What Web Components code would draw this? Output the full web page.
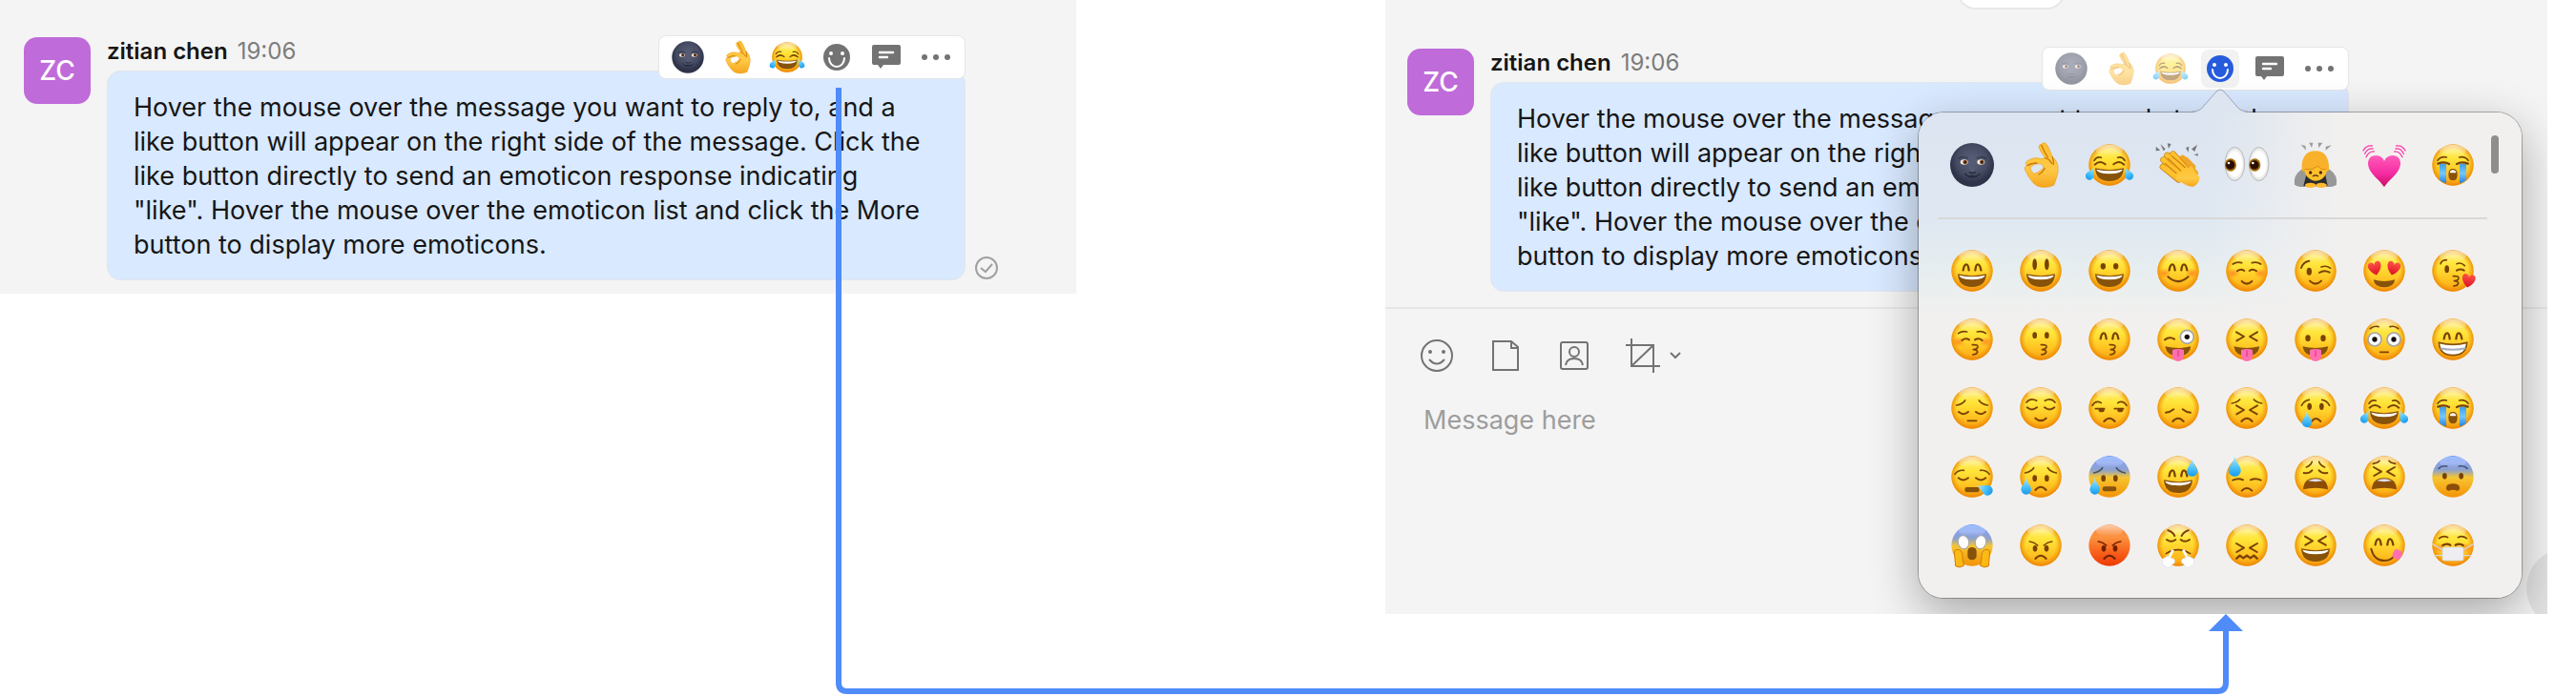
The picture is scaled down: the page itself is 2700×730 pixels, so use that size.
<!DOCTYPE html>
<html lang="en">
<head>
<meta charset="utf-8">
<title>Message reactions</title>
<style>
  body {
    margin: 0;
    background: #fff;
    color: #161616;
    font-family: Inter, "Liberation Sans", sans-serif;
  }
</style>
</head>
<body>
<reaction-guide>
  <chat-panel slot="before">
    <chat-message initials="ZC" author="zitian chen" time="19:06" delivered>
      Hover the mouse over the message you want to reply to, and a like button will appear on the right side of the message. Click the like button directly to send an emoticon response indicating "like". Hover the mouse over the emoticon list and click the More button to display more emoticons.
      <reaction-bar slot="actions"></reaction-bar>
    </chat-message>
  </chat-panel>
  <chat-panel slot="after" conversation>
    <chat-message initials="ZC" author="zitian chen" time="19:06">
      Hover the mouse over the message you want to reply to, and a like button will appear on the right side of the message. Click the like button directly to send an emoticon response indicating "like". Hover the mouse over the emoticon list and click the More button to display more emoticons.
      <reaction-bar slot="actions" open></reaction-bar>
    </chat-message>
    <message-composer slot="composer"></message-composer>
  </chat-panel>
</reaction-guide>

<script>
// Emoji are drawn on a 132 x 132 grid, the face is a circle round (66, 66).
const mirror = (markup) => `${markup}<g transform="translate(132 0) scale(-1 1)">${markup}</g>`;
const line = (d, width = 6) => `<path d="${d}" fill="none" stroke="var(--ink, #7a4204)" stroke-width="${width}" stroke-linecap="round" stroke-linejoin="round"/>`;
const pair = (d, width) => mirror(line(d, width));
const oval = (cx, cy, rx, ry, fill = 'var(--ink, #7a4204)') => `<ellipse cx="${cx}" cy="${cy}" rx="${rx}" ry="${ry}" fill="${fill}"/>`;
const dots = (cx, cy, rx = 7, ry = 10) => mirror(oval(cx, cy, rx, ry));
const shape = (d, fill, extra = '') => `<path d="${d}" fill="${fill}" ${extra}/>`;

const arches = pair('M38 64Q41 46 48 46Q54 46 56 64', 7);
const squint = (top) => pair(`M33 ${top}L57 ${top + 14}L34 ${top + 27}`, 6);
const blush = mirror(oval(22, 74, 22, 16, 'url(#blush)'));
const kiss = line('M67 83Q86 82 84 90Q82 97 70 98Q84 99 83 106Q80 113 68 114', 5);
const frown = line('M49 108Q66 88 83 108');
const grin = shape('M21 76Q66 87 111 76Q109 117 66 117Q23 117 21 76Z', '#87520a')
  + shape('M25 80Q66 90 107 80Q105 92 66 94Q27 92 25 80Z', '#fff');
const tongueMouth = shape('M25 88Q66 98 106 88Q102 118 66 119Q30 118 25 88Z', '#87520a')
  + shape('M48 99Q66 93 84 99V118Q82 135 66 135Q50 135 48 118Z', '#ff6fb0')
  + '<path d="M66 100V120" stroke="#e0408a" stroke-width="4"/>';
const wail = shape('M27 106Q28 70 66 70Q104 70 105 106Q66 96 27 106Z', '#8c4d06')
  + shape('M42 79Q66 66 90 79Q66 84 42 79Z', '#dfe0ec');
const heart = (x, y, scale, turn, fill = 'url(#heart)') =>
  `<path transform="translate(${x} ${y}) rotate(${turn}) scale(${scale})" d="M0 22C-26 4 -25 -20 -11 -20Q-2 -20 0 -10Q2 -20 11 -20C25 -20 26 4 0 22Z" fill="${fill}"/>`;
const drop = (x, y, scale = 1, turn = 0) =>
  `<path transform="translate(${x} ${y}) rotate(${turn}) scale(${scale})" d="M0 -26C3 -8 16 0 16 12A16 16 0 0 1 -16 12C-16 0 -3 -8 0 -26Z" fill="url(#tear)"/>`;
const wideEye = (cx, cy, pupil = 8) =>
  `<circle cx="${cx}" cy="${cy}" r="21" fill="#fff" stroke="#a5a5a5" stroke-width="5"/><circle cx="${cx}" cy="${cy}" r="${pupil}" fill="#160e0a"/>`;
const browsWorried = pair('M17 54Q36 50 44 38', 5);
const joy = pair('M18 52Q26 38 40 43', 5) + pair('M20 65Q36 50 53 64') + grin
  + drop(8, 92, .8, 28) + drop(124, 92, .8, -28);
const sob = mirror('<path d="M24 62H45V124Q34 121 24 113Z" fill="url(#stream)"/>')
  + pair('M18 52Q28 38 46 42', 5) + pair('M19 62Q38 54 54 63', 7)
  + shape('M52 95Q52 78 66 78Q80 78 80 95Q80 115 66 115Q52 115 52 95Z', '#87520a')
  + shape('M56 91Q57 82 66 82Q75 82 76 91Z', '#fff');
const angry = pair('M31 54Q44 55 56 66', 5) + dots(48, 76) + frown;

const faces = {
  'smile': arches + grin,
  'smiley': dots(47, 46, 7, 18) + grin,
  'grinning': dots(46, 52, 8, 10) + grin,
  'blush': blush + arches + line('M34 85Q66 114 98 85'),
  'relaxed': blush + pair('M22 45Q34 36 50 41', 5) + pair('M36 67Q47 58 58 66') + line('M50 99Q66 115 82 99'),
  'wink': line('M21 57Q28 37 46 35') + line('M84 54Q100 48 113 58', 5) + oval(46, 68, 8, 12) + line('M78 72Q93 62 110 71') + line('M48 98Q66 116 84 98'),
  'heart-eyes': heart(37, 58, 1, -14) + heart(95, 58, 1, 14) + shape('M32 94Q66 104 100 94Q96 118 66 118Q36 118 32 94Z', '#87520a'),
  'kissing-heart': line('M27 44Q31 32 46 32', 5) + line('M78 44Q91 38 103 50', 5) + oval(47, 61, 7, 12) + line('M78 65Q90 58 101 65') + kiss + heart(115, 97, 1, 10),
  'kissing-closed-eyes': blush + pair('M23 47Q34 38 50 42', 5) + pair('M34 69Q45 60 57 67') + kiss,
  'kissing': dots(47, 53) + kiss,
  'kissing-smiling-eyes': arches + kiss,
  'winking-tongue': line('M24 67Q39 56 54 65') + wideEye(94, 58) + tongueMouth,
  'squinting-tongue': squint(43) + tongueMouth,
  'tongue': dots(42, 62, 8, 10) + tongueMouth,
  'flushed': blush + pair('M22 32Q34 22 48 26', 5) + mirror(wideEye(36, 66)) + line('M53 106H79', 5),
  'grin': arches + shape('M22 76Q66 88 110 76Q108 116 66 116Q24 116 22 76Z', '#fff', 'stroke="#87520a" stroke-width="5"') + '<path d="M26 94Q66 103 106 94" fill="none" stroke="#a9aebd" stroke-width="6"/>',
  'pensive': pair('M17 57Q36 54 44 42', 5) + pair('M24 78Q38 91 54 78') + line('M52 106H80', 5),
  'relieved': pair('M21 48Q34 32 53 43', 5) + pair('M23 64Q38 77 54 64') + line('M49 98Q66 113 83 98'),
  'unamused': pair('M12 58Q24 40 40 50', 5) + line('M22 68H50', 5) + line('M82 68H110', 5) + oval(41, 73, 9, 6) + oval(100, 73, 9, 6) + frown,
  'disappointed': pair('M27 80Q42 79 52 70') + frown,
  'persevering': pair('M19 51Q36 48 44 39', 5) + squint(58) + frown,
  'crying': pair('M22 58Q30 42 46 40', 5) + dots(47, 61, 7, 11) + line('M54 108Q66 90 82 108') + drop(39, 100, .95),
  'joy': joy,
  'sob': sob,
  'sleepy': pair('M12 58Q22 44 40 46', 5) + pair('M23 70Q38 83 54 70') + '<rect x="43" y="99" width="46" height="16" rx="7" fill="#87520a"/>' + drop(104, 104, 1, -65),
  'sad-relieved': browsWorried + dots(47, 71) + frown + drop(20, 94),
  'anxious': '<g style="--ink:#4c5360">' + browsWorried + '</g>' + dots(47, 71) + '<rect x="44" y="97" width="44" height="15" rx="7" fill="#87520a"/>' + drop(20, 94),
  'sweat-smile': arches + grin + drop(110, 36, 1.05),
  'sweat': pair('M22 77Q38 69 54 76') + line('M50 110Q66 94 82 110') + drop(28, 32, 1.2),
  'weary': pair('M37 36Q51 31 55 19', 5) + pair('M29 54Q44 58 55 46') + wail,
  'tired': pair('M31 25Q46 23 51 16', 5) + squint(36) + wail,
  'fearful': '<g style="--ink:#46536f">' + pair('M21 40Q30 30 47 33', 5) + '</g>' + dots(40, 64) + shape('M45 100Q46 88 66 88Q86 88 87 100Q88 110 78 110Q66 104 54 110Q44 110 45 100Z', '#8c4d06'),
  'scream': mirror('<ellipse cx="39" cy="56" rx="17" ry="21" transform="rotate(-12 39 56)" fill="#fff" stroke="#a7a7a7" stroke-width="3"/>')
    + '<rect x="52" y="72" width="28" height="40" rx="13" fill="#87520a"/>'
    + mirror('<path d="M10 84Q16 77 26 80Q38 86 36 106L40 130Q26 139 14 131Z" fill="#fcb914" stroke="#cf7d09" stroke-width="3"/>'),
  'angry': angry,
  'rage': '<g style="--ink:#702002">' + angry + '</g>',
  'triumph': pair('M34 19Q48 23 55 36') + pair('M30 48Q44 59 58 48') + line('M28 92Q66 68 104 92', 5)
    + mirror('<path d="M50 80L36 108" stroke="#fff" stroke-width="8"/><path d="M17 119a9 9 0 0 1 8-14a11 11 0 0 1 20 2a9 9 0 0 1 3 18a12 12 0 0 1-22 6a9 9 0 0 1-9-12Z" fill="#fff" stroke="#cfdcec" stroke-width="2"/>'),
  'confounded': squint(60) + line('M34 107L44 98L55 106L66 98L77 106L88 98L98 107', 7),
  'laughing': squint(38) + grin,
  'yum': arches + line('M25 77Q34 114 66 114Q92 114 103 91') + '<rect x="93" y="80" width="28" height="29" rx="10" transform="rotate(25 107 95)" fill="#ff6fae"/>',
  'mask': blush + pair('M23 44Q36 34 50 41', 5) + pair('M34 66Q46 58 58 65', 7)
    + '<g style="--ink:#d9d5d0">' + pair('M2 62L36 82', 4) + pair('M8 98L36 98', 4) + '</g>'
    + '<rect x="33" y="72" width="66" height="42" rx="5" fill="#eeeef1" stroke="#d0d0d4" stroke-width="2"/>'
};

const spark = (points) => `<polygon points="${points}" fill="#777"/>`;
const objects = {
  'new-moon': `<circle cx="66" cy="66" r="69" fill="url(#moon)"/>
    <path d="M22 46Q36 36 54 45M80 45Q98 36 112 46" fill="none" stroke="#33384c" stroke-width="4"/>
    <path d="M61 42L58 86Q67 94 76 86L72 42Z" fill="#545b73"/><path d="M57 88Q67 95 78 88" fill="none" stroke="#262b3d" stroke-width="4"/>
    <ellipse cx="41" cy="57" rx="12" ry="8" fill="#f6ebe0"/><ellipse cx="94" cy="57" rx="12" ry="8" fill="#f6ebe0"/>
    <circle cx="44" cy="57" r="7" fill="#7b4422"/><circle cx="97" cy="57" r="7" fill="#7b4422"/>
    <circle cx="44" cy="57" r="3" fill="#111"/><circle cx="97" cy="57" r="3" fill="#111"/>
    <path d="M44 94Q66 117 90 94M54 103Q67 98 80 103" fill="none" stroke="#252a3c" stroke-width="4" stroke-linecap="round"/>`,
  'ok-hand': `<path fill-rule="evenodd" fill="url(#hand)" stroke="#e89a16" stroke-width="2" d="M68 2Q72 -6 80 -3Q88 4 94 20L103 41Q118 53 120 72Q122 88 116 104Q112 118 107 130Q94 137 72 136Q52 134 42 122Q26 104 17 82Q12 70 24 68Q14 60 24 53Q44 40 64 46Q72 50 79 42Q64 24 60 9Q62 0 68 2ZM34 72Q32 86 46 94Q60 90 74 76Q76 68 66 62Q48 60 34 72Z"/>
    <path d="M68 4Q76 24 88 42M24 68Q36 60 54 60M80 44Q94 48 101 62M79 76Q71 90 60 96M103 42Q108 56 106 64" fill="none" stroke="#cc7a0c" stroke-width="4" stroke-linecap="round"/>`,
  'clap': `<g fill="none" stroke-linecap="round">
      <path d="M62 44L112 100M80 44L120 92M90 50L112 72" stroke="#f0a628" stroke-width="18"/>
      <path d="M18 72L68 112M20 50L82 110M32 36L96 104M50 32L106 96" stroke="#c87c12" stroke-width="20"/>
      <path d="M18 72L70 112M20 50L82 110M32 36L96 104M50 32L106 96" stroke="#ffc12e" stroke-width="16"/></g>
    <path d="M60 100L108 68Q124 96 134 104Q132 126 114 134Q92 136 60 108Z" fill="url(#hand)"/>
    <path d="M26 62L60 92M34 46L74 84M46 38L88 74" fill="none" stroke="#cf8314" stroke-width="4" stroke-linecap="round"/>`
    + spark('10,0 26,16 20,22') + spark('-4,8 10,20 -4,22') + spark('90,12 100,8 98,26') + spark('108,16 126,2 118,24') + spark('116,34 128,30 128,38') + spark('32,-2 44,0 36,14'),
  'eyes': `<g stroke="#bdbdbd" stroke-width="3" fill="url(#ball)"><ellipse cx="28" cy="63" rx="31" ry="53"/><ellipse cx="104" cy="63" rx="31" ry="53"/></g>
    <g fill="#a26b06"><ellipse cx="15" cy="66" rx="18" ry="20"/><ellipse cx="91" cy="66" rx="18" ry="20"/></g>
    <g fill="#2a0d02"><circle cx="14" cy="66" r="14"/><circle cx="90" cy="66" r="14"/></g>
    <g fill="#fff"><circle cx="9" cy="60" r="4"/><circle cx="85" cy="60" r="4"/></g>`,
  'bow': `<path d="M0 128Q-4 98 20 82Q64 44 112 82Q136 98 132 128Q120 138 88 134H44Q12 138 0 128Z" fill="#989898"/>
    <path d="M38 92H96L104 132H28Z" fill="#2c2c2e"/>
    <path d="M29 58Q26 98 48 110Q66 122 86 110Q106 98 102 58Z" fill="#ffc02c"/>
    <path d="M23 82Q20 22 66 22Q110 22 108 82Q102 92 98 80Q84 84 74 70Q56 84 32 80Q26 92 23 82Z" fill="#f9b02a"/>
    <path d="M98 80Q84 84 74 70Q56 84 32 80" fill="none" stroke="#d98a13" stroke-width="3"/>
    <ellipse cx="50" cy="90" rx="5" ry="5" fill="#4b2505"/><ellipse cx="82" cy="90" rx="5" ry="5" fill="#4b2505"/>
    <path d="M57 102Q66 95 75 102" fill="none" stroke="#4b2505" stroke-width="4"/>
    <ellipse cx="50" cy="130" rx="17" ry="8" fill="#ffba2c"/><ellipse cx="84" cy="130" rx="17" ry="8" fill="#ffba2c"/>
    <g opacity=".7">` + spark('20,2 34,6 36,20') + spark('46,-4 58,-4 54,12') + spark('74,-4 88,-4 76,12') + spark('98,8 116,4 98,20') + '</g>',
  'heartbeat': `<path d="M66 136C48 108 14 92 15 58Q18 36 40 36Q60 38 66 54Q72 38 92 36Q114 36 117 58C118 92 84 108 66 136Z" fill="url(#pink)"/>`
    + mirror('<path d="M28 6Q9 3 0 21M30 15Q14 12 5 31M34 24Q19 22 9 41" fill="none" stroke="#f83ca9" stroke-width="4" stroke-linecap="round"/>')
};

const blueTops = ['anxious', 'fearful', 'scream'];

class EmojiGlyph extends HTMLElement {
  connectedCallback() {
    if (this.shadowRoot) {
      return;
    }
    const name = this.getAttribute('name');
    const skin = name === 'rage' ? 'red' : blueTops.includes(name) ? 'cold' : 'skin';
    const art = objects[name] || `<circle cx="66" cy="66" r="65" fill="url(#${skin})"/>${skin === 'skin' ? '<circle cx="66" cy="66" r="65" fill="url(#edge)"/>' : ''}<ellipse cx="66" cy="20" rx="42" ry="18" fill="url(#shine)"/>${faces[name]}`;
    this.attachShadow({ mode: 'open' }).innerHTML = `
      <style>
        :host { display: block; width: var(--emoji-size, 44px); height: var(--emoji-size, 44px); }
        svg { display: block; width: 100%; height: 100%; overflow: visible; }
      </style>
      <svg viewBox="0 0 132 132" aria-hidden="true">
        <defs>
          <linearGradient id="skin" x2="0" y2="1"><stop offset="0" stop-color="#fff07a"/><stop offset=".35" stop-color="#ffe53a"/><stop offset=".65" stop-color="#ffc925"/><stop offset="1" stop-color="#fba414"/></linearGradient>
          <radialGradient id="edge"><stop offset=".72" stop-color="#f08a00" stop-opacity="0"/><stop offset="1" stop-color="#e67c00" stop-opacity=".75"/></radialGradient>
          <linearGradient id="shine" x2="0" y2="1"><stop offset="0" stop-color="#fff" stop-opacity=".6"/><stop offset="1" stop-color="#fff" stop-opacity="0"/></linearGradient>
          <linearGradient id="red" x2="0" y2="1"><stop offset="0" stop-color="#f98536"/><stop offset=".3" stop-color="#fb9340"/><stop offset=".6" stop-color="#fa6a20"/><stop offset="1" stop-color="#ee3904"/></linearGradient>
          <linearGradient id="cold" x2="0" y2="1"><stop offset="0" stop-color="#1d65f8"/><stop offset=".16" stop-color="#84a0f0"/><stop offset=".34" stop-color="#8ea2cc"/><stop offset=".52" stop-color="#f6c531"/><stop offset="1" stop-color="#f39306"/></linearGradient>
          <radialGradient id="blush"><stop offset="0" stop-color="#ff7a1c" stop-opacity=".75"/><stop offset="1" stop-color="#ff7a1c" stop-opacity="0"/></radialGradient>
          <linearGradient id="heart" x2="0" y2="1"><stop offset="0" stop-color="#ff5248"/><stop offset="1" stop-color="#dc1024"/></linearGradient>
          <linearGradient id="pink" x2="0" y2="1"><stop offset="0" stop-color="#ff5cba"/><stop offset=".6" stop-color="#f429a0"/><stop offset="1" stop-color="#c50d5d"/></linearGradient>
          <linearGradient id="tear" x2="0" y2="1"><stop offset="0" stop-color="#b5eafc"/><stop offset=".5" stop-color="#56c6fa"/><stop offset="1" stop-color="#149bee"/></linearGradient>
          <linearGradient id="stream" x2="0" y2="1"><stop offset="0" stop-color="#3f9de8"/><stop offset=".5" stop-color="#78c6f8"/><stop offset="1" stop-color="#1f7fe0"/></linearGradient>
          <linearGradient id="hand" x2="0" y2="1"><stop offset="0" stop-color="#ffc02f"/><stop offset=".6" stop-color="#ffc946"/><stop offset="1" stop-color="#f5a61e"/></linearGradient>
          <radialGradient id="moon" cx=".5" cy=".4"><stop offset="0" stop-color="#5a617a"/><stop offset=".7" stop-color="#454b62"/><stop offset="1" stop-color="#2e3349"/></radialGradient>
          <radialGradient id="ball"><stop offset=".7" stop-color="#fff"/><stop offset="1" stop-color="#dcdcdc"/></radialGradient>
        </defs>
        ${art}
      </svg>`;
  }
}

const frequent = ['new-moon', 'ok-hand', 'joy', 'clap', 'eyes', 'bow', 'heartbeat', 'sob'];
const allFaces = [
  'smile', 'smiley', 'grinning', 'blush', 'relaxed', 'wink', 'heart-eyes', 'kissing-heart',
  'kissing-closed-eyes', 'kissing', 'kissing-smiling-eyes', 'winking-tongue', 'squinting-tongue', 'tongue', 'flushed', 'grin',
  'pensive', 'relieved', 'unamused', 'disappointed', 'persevering', 'crying', 'joy', 'sob',
  'sleepy', 'sad-relieved', 'anxious', 'sweat-smile', 'sweat', 'weary', 'tired', 'fearful',
  'scream', 'angry', 'rage', 'triumph', 'confounded', 'laughing', 'yum', 'mask'
];
const emojiButton = (name) => `<button type="button" aria-label="${name}"><emoji-glyph name="${name}"></emoji-glyph></button>`;
const buttonReset = 'button { display: grid; place-items: center; margin: 0; padding: 0; border: 0; background: none; color: inherit; font: inherit; cursor: pointer; }';

class EmojiPicker extends HTMLElement {
  connectedCallback() {
    if (this.shadowRoot) {
      return;
    }
    this.attachShadow({ mode: 'open' }).innerHTML = `
      <style>
        ${buttonReset}
        :host { display: block; }
        .card {
          display: flex;
          padding: 0 24px 0 20px;
          border-radius: 26px;
          background:
            linear-gradient(to right, rgba(242, 240, 239, 0) 48%, #f2f0ef 70%),
            linear-gradient(to bottom, #dbe4f0 0, #dfe8f2 22%, #e8eeef 34%, #f2f0ef 42%);
          box-shadow: 0 0 0 1px rgba(0, 0, 0, .28), 0 16px 50px rgba(0, 0, 0, .32);
        }
        .row { display: grid; grid-template-columns: repeat(8, 72px); grid-auto-rows: 72px; }
        .frequent { padding: 19px 0; border-bottom: 2px solid #d9d8d8; }
        .all { padding: 18px 0 19px; }
        .thumb { width: 8px; height: 40px; margin: 24px 0 0 4px; border-radius: 4px; background: #8e8e8e; }
        .tip { position: absolute; left: 287px; top: -25px; width: 58px; height: 27px; }
      </style>
      <div class="card">
        <div>
          <div class="row frequent">${frequent.map(emojiButton).join('')}</div>
          <div class="row all">${allFaces.map(emojiButton).join('')}</div>
        </div>
        <div class="thumb"></div>
      </div>
      <svg class="tip" viewBox="0 0 58 27" aria-hidden="true">
        <path d="M0 25Q8 24 12 18L25 3Q29 -1 33 3L46 18Q50 24 58 25V27H0Z" fill="#dce5f0"/>
        <path d="M0 24Q8 24 12 18L25 3Q29 -1 33 3L46 18Q50 24 58 24" fill="none" stroke="#9aa5b5"/>
      </svg>`;
  }
}

class ReactionBar extends HTMLElement {
  connectedCallback() {
    if (this.shadowRoot) {
      return;
    }
    const open = this.hasAttribute('open');
    this.attachShadow({ mode: 'open' }).innerHTML = `
      <style>
        ${buttonReset}
        :host { display: block; }
        .bar {
          display: flex;
          gap: 12px;
          padding: 2px 10px;
          border: 1px solid #e6e6e6;
          border-radius: 8px;
          background: #fff;
          color: #737373;
          --emoji-size: 32px;
        }
        button { width: 40px; height: 40px; border-radius: 8px; }
        svg { width: 32px; height: 32px; }
        :host([open]) emoji-glyph { opacity: .5; }
        :host([open]) .more { background: #f2f2f2; color: #265bdc; }
        emoji-picker { position: absolute; top: 69px; right: -181px; z-index: 1; }
      </style>
      <div class="bar" role="toolbar" aria-label="Message actions">
        ${['new-moon', 'ok-hand', 'joy'].map(emojiButton).join('')}
        <button class="more" type="button" aria-label="More emoticons" aria-expanded="${open}">
          <svg viewBox="0 0 32 32" aria-hidden="true"><circle cx="16" cy="16" r="14" fill="currentColor"/><circle cx="10" cy="12" r="2" fill="#fff"/><circle cx="22" cy="12" r="2" fill="#fff"/><path d="M8 17A8 9 0 0 0 24 17" fill="none" stroke="#fff" stroke-width="2" stroke-linecap="round"/></svg>
        </button>
        <button type="button" aria-label="Reply">
          <svg viewBox="0 0 32 32" aria-hidden="true"><path d="M3 3H29Q31 3 31 5V22Q31 24 29 24H13L10 28L7 24H3Q1 24 1 22V5Q1 3 3 3Z" fill="currentColor"/><path d="M9 11H23M9 16H17" stroke="#fff" stroke-width="2.4" stroke-linecap="round"/></svg>
        </button>
        <button type="button" aria-label="More actions">
          <svg viewBox="0 0 32 32" aria-hidden="true" fill="currentColor"><circle cx="4" cy="16" r="3"/><circle cx="16" cy="16" r="3"/><circle cx="28" cy="16" r="3"/></svg>
        </button>
      </div>
      ${open ? '<emoji-picker></emoji-picker>' : ''}`;
  }
}

class ChatMessage extends HTMLElement {
  connectedCallback() {
    if (this.shadowRoot) {
      return;
    }
    this.attachShadow({ mode: 'open' }).innerHTML = `
      <style>
        :host { display: flex; align-items: flex-start; gap: 17px; padding: 0 25px; }
        .avatar {
          flex: none;
          display: grid;
          place-items: center;
          width: 70px;
          height: 70px;
          border-radius: 14px;
          background: #bf6bd9;
          color: #fff;
          font-size: 28px;
          font-weight: 500;
        }
        .meta { display: flex; gap: 10px; height: 35px; font-size: 24px; line-height: 30px; }
        .meta strong { font-weight: 600; }
        .meta time { color: #7c7c7c; }
        .line { display: flex; align-items: flex-end; gap: 9px; }
        .bubble {
          position: relative;
          box-sizing: border-box;
          max-width: 900px;
          padding: 20px 36px 18px 27px;
          border: 1px solid #e2e6ec;
          border-radius: 14px;
          background: #d9e9ff;
          font-size: 27px;
          line-height: 36px;
        }
        p { margin: 0; }
        ::slotted(reaction-bar) { position: absolute; top: -38px; right: -1px; }
        .delivered { flex: none; width: 26px; height: 26px; }
      </style>
      <div class="avatar">${this.getAttribute('initials')}</div>
      <div>
        <div class="meta"><strong>${this.getAttribute('author')}</strong><time>${this.getAttribute('time')}</time></div>
        <div class="line">
          <div class="bubble"><p><slot></slot></p><slot name="actions"></slot></div>
          ${this.hasAttribute('delivered') ? '<svg class="delivered" viewBox="0 0 26 26" fill="none" stroke="#a0a0a0" stroke-width="2" role="img" aria-label="Delivered"><circle cx="13" cy="13" r="11"/><path d="M7 13L12 17L19 9"/></svg>' : ''}
        </div>
      </div>`;
  }
}

class MessageComposer extends HTMLElement {
  connectedCallback() {
    if (this.shadowRoot) {
      return;
    }
    this.attachShadow({ mode: 'open' }).innerHTML = `
      <style>
        ${buttonReset}
        :host { display: flex; flex-direction: column; gap: 32px; padding: 31px 36px 24px; border-top: 2px solid #e6e6e6; }
        .tools { display: flex; gap: 36px; color: #737373; }
        .tools button { grid-auto-flow: column; gap: 10px; }
        svg { display: block; fill: none; stroke: currentColor; stroke-width: 2; }
        textarea {
          height: 197px;
          padding: 0 4px;
          border: 0;
          outline: 0;
          resize: none;
          background: none;
          color: inherit;
          font: inherit;
          font-size: 27px;
          line-height: 36px;
        }
        textarea::placeholder { color: #9d9d9d; opacity: 1; }
      </style>
      <div class="tools">
        <button type="button" aria-label="Emoticons"><svg width="36" height="36" viewBox="0 0 36 36"><circle cx="18" cy="18" r="16"/><path d="M10 22Q18 31 26 22"/><g fill="currentColor" stroke="none"><circle cx="11" cy="14" r="2"/><circle cx="25" cy="14" r="2"/></g></svg></button>
        <button type="button" aria-label="Files"><svg width="36" height="36" viewBox="0 0 36 36"><path d="M5 3H24L31 9V33H5ZM24 3V10H31"/></svg></button>
        <button type="button" aria-label="Contact card"><svg width="36" height="36" viewBox="0 0 36 36"><rect x="4" y="4" width="28" height="28" rx="2"/><circle cx="18" cy="14" r="5"/><path d="M9 28Q10 21 18 21Q26 21 27 28"/></svg></button>
        <button type="button" aria-label="Screenshot"><svg width="36" height="36" viewBox="0 0 36 36"><path d="M6 0V29H36M0 7H29V36M29 7L6 29"/></svg><svg width="12" height="8" viewBox="0 0 12 8"><path d="M1 1L6 6L11 1"/></svg></button>
      </div>
      <textarea placeholder="Message here" aria-label="Message"></textarea>`;
  }
}

class ChatPanel extends HTMLElement {
  connectedCallback() {
    if (this.shadowRoot) {
      return;
    }
    const conversation = this.hasAttribute('conversation');
    this.attachShadow({ mode: 'open' }).innerHTML = `
      <style>
        :host { display: block; position: relative; overflow: hidden; background: #f4f4f4; }
        .messages { padding: 39px 0 14px; }
        :host([conversation]) .messages { padding: 51px 0 16px; }
        :host([conversation]) ::slotted(chat-message) { padding: 0 23px; }
        .date { position: absolute; top: -30px; left: 50%; width: 110px; height: 36px; margin-left: -10px; border: 2px solid #e8e8e8; border-radius: 20px; background: #fff; }
        .send { position: absolute; right: -62px; bottom: -15px; width: 84px; height: 84px; border-radius: 50%; background: #e2e2e2; }
      </style>
      ${conversation ? '<div class="date"></div><div class="send"></div>' : ''}
      <div class="messages"><slot></slot></div>
      <slot name="composer"></slot>`;
  }
}

class ReactionGuide extends HTMLElement {
  connectedCallback() {
    if (this.shadowRoot) {
      return;
    }
    this.attachShadow({ mode: 'open' }).innerHTML = `
      <style>
        :host { display: flex; align-items: flex-start; gap: 324px; position: relative; box-sizing: border-box; min-height: 730px; padding-right: 30px; }
        ::slotted([slot="before"]) { flex: 1128 1 0; min-width: 0; }
        ::slotted([slot="after"]) { flex: 1218 1 0; min-width: 0; }
        .connector { position: absolute; left: 876px; top: 92px; width: 1476px; height: 636px; pointer-events: none; }
      </style>
      <slot name="before"></slot>
      <slot name="after"></slot>
      <svg class="connector" viewBox="0 0 1476 636" aria-hidden="true">
        <path d="M3 0V624Q3 633 12 633H1448Q1457 633 1457 624V566" fill="none" stroke="#4f8bf9" stroke-width="6"/>
        <path d="M1439 570L1457 552L1475 570Z" fill="#4f8bf9"/>
      </svg>`;
  }
}

customElements.define('emoji-glyph', EmojiGlyph);
customElements.define('emoji-picker', EmojiPicker);
customElements.define('reaction-bar', ReactionBar);
customElements.define('chat-message', ChatMessage);
customElements.define('message-composer', MessageComposer);
customElements.define('chat-panel', ChatPanel);
customElements.define('reaction-guide', ReactionGuide);
</script>
</body>
</html>
